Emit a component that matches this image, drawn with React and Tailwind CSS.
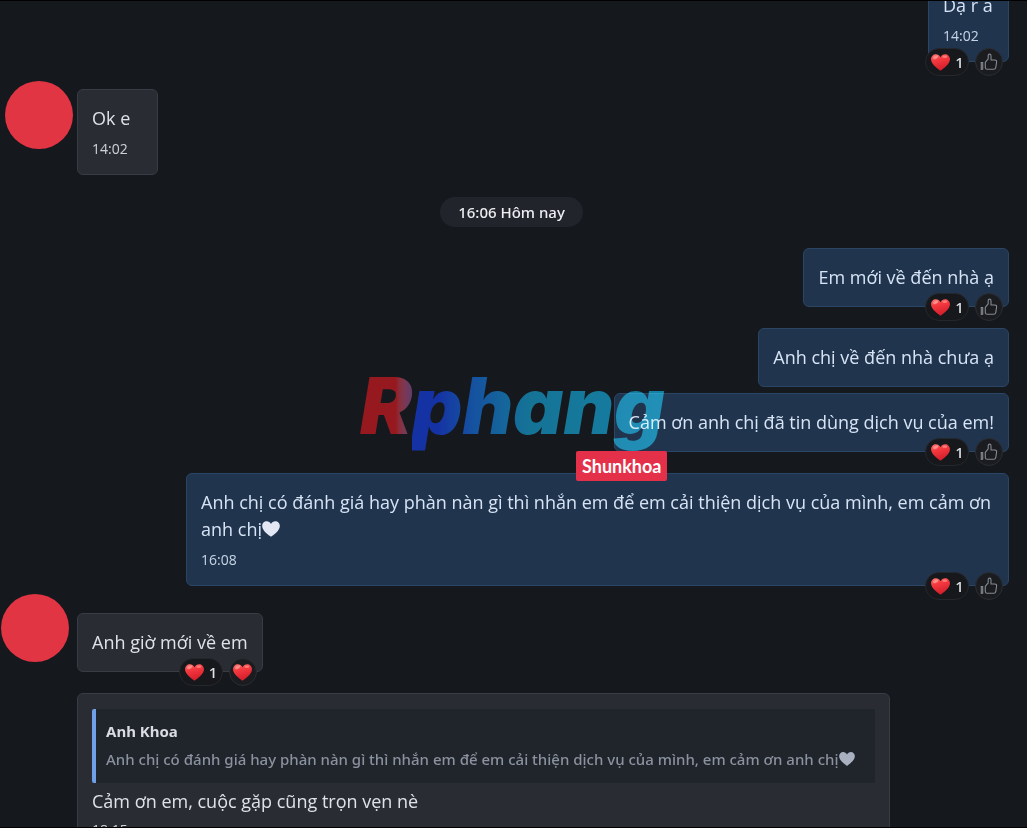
import React from 'react';

const messages = [
  {
    id: 1, mine: true, gap: '', text: 'Dạ r a', time: '14:02', heart: 1, action: 'like',
  },
  {
    id: 2, gap: 'mt-[27px]', text: 'Ok e', time: '14:02', avatar: 'ml-[5px] -mt-2',
  },
  { id: 3, divider: true, text: '16:06 Hôm nay' },
  { id: 4, mine: true, gap: 'mt-[21px]', text: 'Em mới về đến nhà ạ', heart: 1, action: 'like' },
  { id: 5, mine: true, gap: 'mt-[21px]', text: 'Anh chị về đến nhà chưa ạ' },
  {
    id: 6, mine: true, gap: 'mt-[6px]', text: 'Cảm ơn anh chị đã tin dùng dịch vụ của em!', heart: 1, action: 'like',
  },
  {
    id: 7,
    mine: true,
    gap: 'mt-[21px]',
    text: 'Anh chị có đánh giá hay phàn nàn gì thì nhắn em để em cải thiện dịch vụ của mình, em cảm ơn anh chị',
    endHeart: true,
    time: '16:08',
    heart: 1,
    action: 'like',
  },
  {
    id: 8, gap: 'mt-[27px]', text: 'Anh giờ mới về em', avatar: 'ml-px -mt-[19px]', heart: 1, action: 'heart',
  },
  {
    id: 9,
    gap: 'mt-[21px]',
    quote: {
      name: 'Anh Khoa',
      text: 'Anh chị có đánh giá hay phàn nàn gì thì nhắn em để em cải thiện dịch vụ của mình, em cảm ơn anh chị',
    },
    text: 'Cảm ơn em, cuộc gặp cũng trọn vẹn nè',
    time: '18:15',
  },
];

const HEART_PATH = 'M12 21.5C9.5 19.6 1.2 14.3 1.2 8.3 1.2 4.9 3.8 2.5 6.7 2.5c2.3 0 4.3 1.3 5.3 3.4 1-2.1 3-3.4 5.3-3.4 2.9 0 5.5 2.4 5.5 5.8 0 6-8.3 11.3-10.8 13.2Z';

const RedHeart = () => (
  <svg viewBox="0 0 24 24" className="h-[21px] w-[21px] shrink-0" aria-hidden="true">
    <defs>
      <linearGradient id="heartRed" x1="0" y1="0" x2="0.3" y2="1">
        <stop offset="0" stopColor="#ff7470" />
        <stop offset="0.4" stopColor="#f5393f" />
        <stop offset="1" stopColor="#d51f2c" />
      </linearGradient>
    </defs>
    <path d={HEART_PATH} fill="url(#heartRed)" />
    <ellipse cx="6.5" cy="6" rx="3.2" ry="1.8" fill="#ffb4ac" opacity="0.6" transform="rotate(-25 6.5 6)" />
    <ellipse cx="17" cy="5.4" rx="2.8" ry="1.4" fill="#ffb4ac" opacity="0.5" />
  </svg>
);

const PlainHeart = ({ className }) => (
  <svg viewBox="1 1 22 22" className={`inline-block align-text-bottom ${className}`} aria-hidden="true">
    <path d={HEART_PATH} fill="currentColor" />
  </svg>
);

const ThumbIcon = () => (
  <svg
    viewBox="0 0 18 18"
    className="h-[18px] w-[18px]"
    fill="none"
    stroke="currentColor"
    strokeWidth="1.1"
    strokeLinejoin="round"
    strokeLinecap="round"
    aria-hidden="true"
  >
    <path d="M1.3 9.5v6.8" />
    <path d="M1.3 9.5h1.4v6.8H1.3" />
    <path d="M5.3 9.4 8.2 5.9V2.6c0-2 2.8-2 2.8.2V7h3.9c1.3 0 1.9.9 1.7 2l-.8 5.3c-.2 1.3-.9 2-2.1 2H7.2c-1.2 0-1.9-.7-1.9-1.8Z" />
  </svg>
);

const Reactions = ({ count, action }) => (
  <div className="absolute right-[5px] -bottom-[15px] flex gap-1.5">
    <button
      type="button"
      aria-label="Reactions"
      className="flex h-7 w-11 items-center justify-center gap-1 rounded-full border border-[#24272c] bg-[#16181c] font-['Noto_Sans'] text-[15px] leading-5 font-medium text-[#dfe3e8]"
    >
      <RedHeart />
      <span>{count}</span>
    </button>
    <button
      type="button"
      aria-label={action === 'like' ? 'Like' : 'Heart'}
      className="flex h-7 w-7 items-center justify-center rounded-full border border-[#2a2d32] bg-[#1a1c20] text-[#858a91]"
    >
      {action === 'like' ? <ThumbIcon /> : <RedHeart />}
    </button>
  </div>
);

const Quote = ({ name, text }) => (
  <blockquote className="mb-[5px] rounded-xs border-l-4 border-[#6f9fe6] bg-[#20242b] pt-2.5 pr-5 pb-2.5 pl-2.5 font-['Noto_Sans',sans-serif] text-[15px]">
    <p className="leading-6 font-bold text-[#d9dde3]">{name}</p>
    <p className="mt-0.5 leading-7 font-medium text-[#8b929f]">
      {text}
      <PlainHeart className="mb-0.5 h-4 w-4 text-[#a9b1c0]" />
    </p>
  </blockquote>
);

const Message = ({ message }) => {
  const { mine, gap, text, time, avatar, quote, endHeart, heart, action } = message;

  return (
    <li className={`flex items-start ${gap} ${mine ? 'justify-end pr-[18px]' : ''}`}>
      {/* Avatar column */}
      {!mine && (
        <div className="w-[77px] shrink-0">
          {avatar && <div className={`h-[68px] w-[68px] rounded-full bg-[#e23544] ${avatar}`} />}
        </div>
      )}

      {/* Bubble */}
      <div
        className={`relative max-w-[823px] min-w-[81px] rounded-md border px-3.5 py-[15px] ${
          mine ? 'border-[#2b4565] bg-[#21344d] text-[#d6e4f5]' : 'border-[#383c44] bg-[#292c33] text-[#dfe2e7]'
        }`}
      >
        {quote && <Quote name={quote.name} text={quote.text} />}
        <p className="text-lg leading-[27px]">
          {text}
          {endHeart && <PlainHeart className="mb-[3px] h-[18px] w-[18px] text-[#e2e7f3]" />}
        </p>
        {time && (
          <time className={`block text-sm leading-[21px] opacity-90 ${quote ? 'mt-1' : 'mt-1.5'}`}>{time}</time>
        )}
        {heart && <Reactions count={heart} action={action} />}
      </div>
    </li>
  );
};

const Watermark = () => (
  <div className="pointer-events-none absolute top-[359px] left-[360px] flex mix-blend-screen font-['Inter'] text-[78px] leading-[91px] font-black text-transparent italic">
    <span className="-mr-2 bg-linear-to-r from-[#8c0000] from-60% to-[#44246a] to-95% bg-clip-text pr-2">
      R
    </span>
    <span className="bg-linear-to-r from-[#001c98] from-10% via-[#006488] via-45% to-[#007498] bg-clip-text pr-2">
      phang
    </span>
  </div>
);

const Tag = () => (
  <div className="pointer-events-none absolute top-[450px] left-[576px] rounded-xs bg-[#e5304a] px-1.5 font-['Lato'] text-lg leading-[30px] font-bold text-white">
    Shunkhoa
  </div>
);

const App = () => (
  <main className="relative h-screen overflow-hidden border-y border-black bg-[#15191e] font-['Open_Sans',sans-serif]">
    <ol className="-mt-[25px]">
      {messages.map((message) =>
        message.divider ? (
          <li key={message.id} className="mt-[22px] flex justify-center pr-1">
            <time className="rounded-full bg-[#21242b] px-[18px] font-['Noto_Sans',sans-serif] text-[15px] leading-[30px] font-medium text-[#eceef1]">
              {message.text}
            </time>
          </li>
        ) : (
          <Message key={message.id} message={message} />
        )
      )}
    </ol>
    <Watermark />
    <Tag />
  </main>
);

export default App;
